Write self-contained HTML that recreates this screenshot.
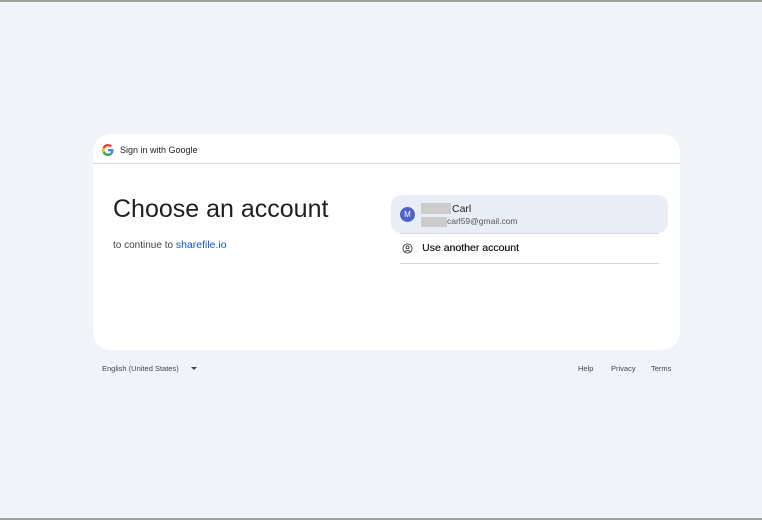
<!DOCTYPE html>
<html><head><style>
body{margin:0;width:762px;height:520px;background:#f0f4f9;font-family:"Liberation Sans",Arial,sans-serif;position:relative;overflow:hidden}
.tb{position:absolute;left:0;top:0;width:762px;height:2px;background:#a0a0a0}
.bb{position:absolute;left:0;bottom:0;width:762px;height:2px;background:#a0a0a0}
.card{position:absolute;left:93px;top:134px;width:587px;height:216px;background:#fff;border-radius:18px}
.hdr{position:absolute;left:0;top:0;width:587px;height:29px;border-bottom:1px solid #dadce0}
.hdr span{position:absolute;left:27px;top:11px;font-size:9px;color:#1f1f1f}
h1{position:absolute;left:20px;top:61px;margin:0;font-weight:400;font-size:25px;color:#1f1f1f}
.sub{position:absolute;left:20px;top:105px;font-size:10px;color:#444}
.sub a{color:#0b57d0;text-decoration:none;font-size:10.5px}
.acct{position:absolute;left:298px;top:61px;width:277px;height:38px;background:#e9eef6;border-radius:10px}
.av{position:absolute;left:9px;top:12px;width:15px;height:15px;border-radius:50%;background:#5063c4;color:#fff;font-size:8px;text-align:center;line-height:15px}
.blur{position:absolute;background:#ccc}
.n{position:absolute;left:61px;top:8px;font-size:10.5px;color:#1f1f1f}
.e{position:absolute;left:56px;top:21px;font-size:8.5px;color:#555}
.l1{position:absolute;left:307px;top:99px;width:259px;height:1px;background:#d5d8dc}
.l2{position:absolute;left:307px;top:129px;width:259px;height:1px;background:#d5d8dc}
.use{position:absolute;left:329px;top:108px;font-size:10.5px;color:#1f1f1f}
.foot{position:absolute;top:364px;font-size:7.5px;color:#444}
</style></head><body>
<div class="tb"></div><div class="bb"></div>
<div class="card">
<div class="hdr">
<svg style="position:absolute;left:9px;top:10px" width="12" height="12" viewBox="0 0 48 48"><path fill="#EA4335" d="M24 9.5c3.5 0 6.7 1.2 9.2 3.6l6.9-6.9C35.9 2.4 30.5 0 24 0 14.6 0 6.6 5.4 2.6 13.3l8 6.2C12.5 13.6 17.8 9.5 24 9.5z"/><path fill="#4285F4" d="M46.1 24.5c0-1.6-.1-3.1-.4-4.5H24v9h12.4c-.5 2.9-2.2 5.3-4.6 6.9l7.7 6c4.5-4.1 6.6-10.3 6.6-17.4z"/><path fill="#FBBC05" d="M10.5 28.6c-.5-1.4-.8-3-.8-4.6s.3-3.2.8-4.6l-8-6.2C.9 16.5 0 20.1 0 24s.9 7.5 2.6 10.7l7.9-6.1z"/><path fill="#34A853" d="M24 48c6.5 0 11.9-2.1 15.9-5.8l-7.7-6c-2.2 1.5-5 2.3-8.2 2.3-6.2 0-11.5-4.1-13.4-9.8l-8 6.1C6.6 42.6 14.6 48 24 48z"/></svg>
<span>Sign in with Google</span></div>
<h1>Choose an account</h1>
<div class="sub">to continue to <a>sharefile.io</a></div>
<div class="acct"><div class="av">M</div>
<div class="blur" style="left:30px;top:8px;width:30px;height:11px"></div>
<div class="n">Carl</div>
<div class="blur" style="left:30px;top:22px;width:26px;height:10px"></div>
<div class="e">carl59@gmail.com</div></div>
<div class="l1"></div>
<svg style="position:absolute;left:309px;top:109px" width="11" height="11" viewBox="0 0 24 24"><circle cx="12" cy="12" r="10" fill="none" stroke="#444" stroke-width="2"/><circle cx="12" cy="9.5" r="3.2" fill="none" stroke="#444" stroke-width="2"/><path d="M6 18.5c2-2.5 10-2.5 12 0" fill="none" stroke="#444" stroke-width="2"/></svg>
<div class="use" style="text-shadow:0.3px 0 0 #1f1f1f">Use another account</div>
<div class="l2"></div>
</div>
<div class="foot" style="left:102px">English (United States)</div>
<div style="position:absolute;left:191px;top:367px;border-left:3px solid transparent;border-right:3px solid transparent;border-top:3px solid #444"></div>
<div class="foot" style="left:578px">Help</div>
<div class="foot" style="left:611px">Privacy</div>
<div class="foot" style="left:651px">Terms</div>
</body></html>
